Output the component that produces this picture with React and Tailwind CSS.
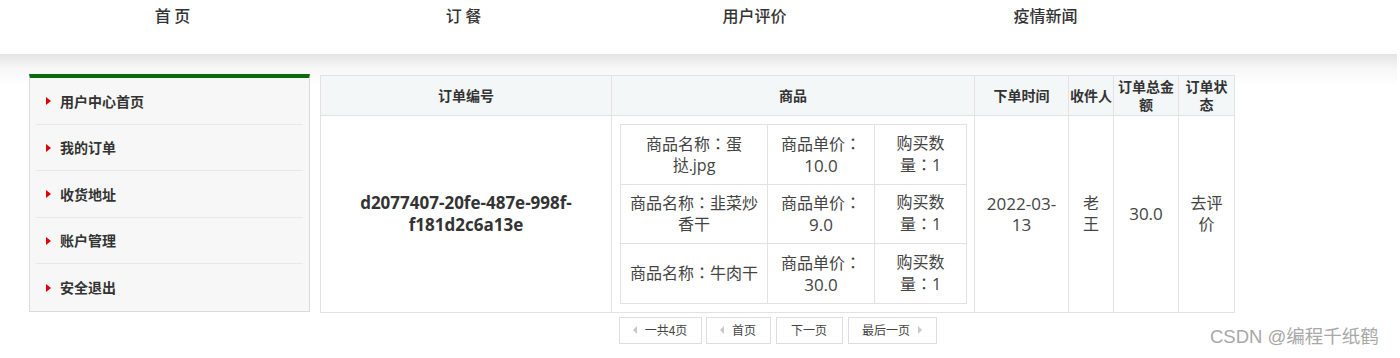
import React from "react";

const navItems = ["首 页", "订 餐", "用户评价", "疫情新闻"];
const sideItems = ["用户中心首页", "我的订单", "收货地址", "账户管理", "安全退出"];

const goods = [
  { name: ["商品名称：蛋", "挞.jpg"], price: ["商品单价：", "10.0"], qty: ["购买数", "量：1"] },
  { name: ["商品名称：韭菜炒", "香干"], price: ["商品单价：", "9.0"], qty: ["购买数", "量：1"] },
  { name: ["商品名称：牛肉干"], price: ["商品单价：", "30.0"], qty: ["购买数", "量：1"] },
];

function Txt({ s }) {
  const parts = s.split("：");
  return (
    <>
      {parts.map((p, i) => (
        <React.Fragment key={i}>
          {i > 0 && <span className="font-['Noto_Sans_CJK_TC',sans-serif]">：</span>}
          {p}
        </React.Fragment>
      ))}
    </>
  );
}

function Lines({ lines }) {
  return (
    <>
      {lines.map((l, i) => (
        <div
          key={i}
          className={"whitespace-nowrap " + (/^[0-9.\-]+$/.test(l) ? "text-[17px]" : "")}
        >
          <Txt s={l} />
        </div>
      ))}
    </>
  );
}

function TriLeft() {
  return (
    <span className="inline-block w-0 h-0 border-y-[4px] border-y-transparent border-r-[4px] border-r-[#c8c8c8] mr-[8px]" />
  );
}
function TriRight() {
  return (
    <span className="inline-block w-0 h-0 border-y-[4px] border-y-transparent border-l-[4px] border-l-[#c8c8c8] ml-[8px]" />
  );
}

export default function App() {
  const th = "border border-[#e2e2e2] bg-[#f3f7f7] font-bold text-[14px] leading-[18px] text-[#333] px-0 text-center align-middle";
  const td = "border border-[#e2e2e2] text-[16px] leading-[21px] text-[#444] text-center align-middle";
  return (
    <div className="relative w-[1400px] h-[358px] overflow-hidden bg-white text-[#333] font-['Open_Sans','Noto_Sans_CJK_SC',sans-serif]">
      {/* top nav */}
      <div className="flex h-[54px] pl-[27px] font-['Noto_Sans_CJK_SC',sans-serif]">
        {navItems.map((n) => (
          <div key={n} className="w-[291px] h-[30px] flex items-center justify-center text-[16px] text-[#333] font-medium whitespace-pre">
            {n}
          </div>
        ))}
      </div>

      {/* shadow band + content */}
      <div className="mr-[3px] bg-[linear-gradient(to_bottom,#e4e4e4,#f6f6f6_14px,#ffffff_32px)] pt-[20px] pl-[29px] flex gap-[10px] items-start">
        {/* sidebar */}
        <div className="w-[281px] bg-[#f7f7f7] border border-[#dadada] border-t-[4px] border-t-[#0b6a0b] font-['Noto_Sans_CJK_SC',sans-serif]">
          {sideItems.map((s, i) => (
            <div
              key={s}
              className={
                "mx-[6px] h-[46.5px] flex items-center pl-[10px] pt-[1px] " +
                (i < sideItems.length - 1 ? "border-b border-[#e8e8e8]" : "")
              }
            >
              <span className="inline-block w-0 h-0 border-y-[4.5px] border-y-transparent border-l-[5px] border-l-[#e00000] mr-[9px]" />
              <span className="text-[14px] font-bold text-[#333]">{s}</span>
            </div>
          ))}
        </div>

        {/* orders */}
        <div className="mt-[1px] flex flex-col items-center">
          <table className="w-[914px] border-collapse table-fixed bg-white">
            <colgroup>
              <col className="w-[291px]" />
              <col className="w-[363px]" />
              <col className="w-[94px]" />
              <col className="w-[45px]" />
              <col className="w-[65px]" />
              <col className="w-[56px]" />
            </colgroup>
            <thead>
              <tr className="h-[40px]">
                <th className={th}>订单编号</th>
                <th className={th}>商品</th>
                <th className={th}>下单时间</th>
                <th className={th + " whitespace-nowrap"}>收件人</th>
                <th className={th}><Lines lines={["订单总金", "额"]} /></th>
                <th className={th}><Lines lines={["订单状", "态"]} /></th>
              </tr>
            </thead>
            <tbody>
              <tr className="h-[196px]">
                <td className="border border-[#e2e2e2] text-center align-middle text-[17px] leading-[22px] font-bold text-[#333]">
                  <div className="whitespace-nowrap">d2077407-20fe-487e-998f-</div>
                  <div className="whitespace-nowrap">f181d2c6a13e</div>
                </td>
                <td className="border border-[#e2e2e2] pt-[8px] pb-[8px] pl-[8px] pr-[8px] align-top">
                  <table className="w-[346px] border-collapse table-fixed">
                    <colgroup>
                      <col className="w-[147px]" />
                      <col className="w-[107px]" />
                      <col className="w-[92px]" />
                    </colgroup>
                    <tbody>
                      {goods.map((g, i) => (
                        <tr key={i} className="h-[59.5px]">
                          <td className={td}><Lines lines={g.name} /></td>
                          <td className={td}><Lines lines={g.price} /></td>
                          <td className={td}><Lines lines={g.qty} /></td>
                        </tr>
                      ))}
                    </tbody>
                  </table>
                </td>
                <td className={td}><Lines lines={["2022-03-", "13"]} /></td>
                <td className={td}><Lines lines={["老", "王"]} /></td>
                <td className={td}><Lines lines={["30.0"]} /></td>
                <td className={td}><Lines lines={["去评", "价"]} /></td>
              </tr>
            </tbody>
          </table>

          {/* pagination */}
          <div className="mt-[4px] flex gap-[4px] text-[12px] text-[#444] font-['Noto_Sans_CJK_SC',sans-serif]">
            <div className="w-[83px] h-[27px] border border-[#dedede] bg-white flex items-center justify-center">
              <TriLeft />一共4页
            </div>
            <div className="w-[65px] h-[27px] border border-[#dedede] bg-white flex items-center justify-center">
              <TriLeft />首页
            </div>
            <div className="w-[67px] h-[27px] border border-[#dedede] bg-white flex items-center justify-center ml-[1px]">
              下一页
            </div>
            <div className="w-[89px] h-[27px] border border-[#dedede] bg-white flex items-center justify-center ml-[1px]">
              最后一页<TriRight />
            </div>
          </div>
        </div>
      </div>

      {/* watermark */}
      <div className="absolute left-[1210px] top-[323px] text-[18.5px] text-[#a8a8a8] whitespace-nowrap font-['Liberation_Sans','Noto_Sans_CJK_SC',sans-serif]">
        CSDN @编程千纸鹤
      </div>
    </div>
  );
}
